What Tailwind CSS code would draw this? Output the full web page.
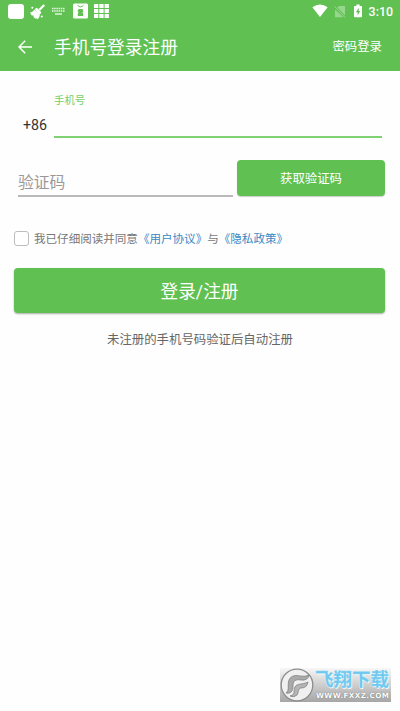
<!DOCTYPE html>
<html lang="zh-CN">
<head>
<meta charset="utf-8">
<title>手机号登录注册</title>
<script src="https://cdn.jsdelivr.net/npm/@tailwindcss/browser@4"></script>
</head>
<body class="bg-[#fefefe]">
<div class="relative flex h-[711px] w-[400px] flex-col overflow-hidden bg-[#fefefe] font-[Roboto,'Noto_Sans_CJK_SC',sans-serif] whitespace-nowrap">
  <header class="h-[71px] shrink-0 bg-[#60c152] text-white">
    <div class="flex h-[22px] items-center justify-between pr-[7px] pl-2">
      <div class="flex items-center">
        <div class="h-[15px] w-4 rounded-[3px] bg-white"></div>
        <svg class="ml-[5px]" width="17" height="17" viewBox="0 0 17 17" fill="white"><path d="M14.500 1.200 L16 2.800 L11 7.700 L9.400 6.200Z"/><path d="M7.500 4.800 L12.400 9.700 L11.200 11 L6.200 6Z"/><path d="M5.700 6.500 L10.900 11.700 C10.700 13.500 9.800 15.300 8.300 16.300 L6.700 14.800 L6.700 16 L4.500 14 L4.600 12.500 L2.700 12.500 L1 9.500 C3 9.500 4.500 8 5.700 6.500Z"/><path d="M6 6 8 5 12 9 10 12Z"/><circle cx="3.300" cy="4.800" r="1"/><circle cx="12.800" cy="13.400" r="1"/></svg>
        <svg class="ml-[6px]" width="13" height="9" viewBox="0 0 13 9" stroke="white" stroke-opacity=".85" fill="none"><path d="M0 1.500h13M0 4h13" stroke-width="1.600" stroke-dasharray="1.500 .7"/><path d="M3 7h7" stroke-width="1.400"/></svg>
        <svg class="ml-2" width="15" height="16" viewBox="0 0 15 16"><rect y=".5" width="15" height="15" rx="1.500" fill="white"/><path d="M4.500 2.300Q7.500 5.400 10.500 2.300" stroke="#60c152" fill="none"/><path d="M4.800 7l1-.9h3.400l1 .9v1.800l-.8.8.8.8V13H4.800v-2.600l.8-.8-.8-.8Z" fill="#60c152"/></svg>
        <svg class="ml-[6px]" width="15" height="14" viewBox="0 0 15 14" fill="white"><path d="M0 0h4.300v4H0zM5.300 0h4.300v4H5.300zM10.600 0h4.300v4h-4.300zM0 5h4.300v4H0zM5.300 5h4.300v4H5.300zM10.600 5h4.300v4h-4.300zM0 10h4.300v4H0zM5.300 10h4.300v4H5.300zM10.600 10h4.300v4h-4.300z"/></svg>
      </div>
      <div class="flex items-center">
        <svg width="16" height="14" viewBox="0 0 16 14"><path d="M.4 3.300Q8-2.300 15.600 3.300L8 13Z" fill="white"/></svg>
        <svg class="ml-[6px]" width="12" height="13" viewBox="0 0 12 13"><path d="M1 4.500V12.200H9.300ZM5 1H11V10.500L3.500 2.600Z" fill="white" fill-opacity=".35"/><path d="M.8 1.600 11.200 12.700" stroke="white" stroke-opacity=".35"/></svg>
        <svg class="ml-2" width="8" height="14" viewBox="0 0 8 14"><path d="M2.400.5h3.200V2H7.200Q8 2 8 2.800v9.700q0 .8-.8.8H.8Q0 13.300 0 12.500V2.800Q0 2 .8 2h1.600Z" fill="white"/><path d="M4.700 3.700 1.900 8.200H3.600v3.300L6.200 7H4.700Z" fill="#60c152"/></svg>
        <span class="ml-[7px] pt-px text-[12.400px] leading-[21px] font-medium">3:10</span>
      </div>
    </div>
    <div class="flex h-[49px] items-center px-[18px]">
      <svg width="14" height="14" viewBox="0 0 14 14" fill="none" stroke="white" stroke-width="1.500"><path d="M14 7H1M7.200.8 1 7l6.200 6.200"/></svg>
      <h1 class="ml-[22px] pt-[2px] text-[17.700px] leading-6">手机号登录注册</h1>
      <span class="ml-auto pt-px text-[12.400px] leading-5">密码登录</span>
    </div>
  </header>
  <main class="flex flex-col">
    <div class="flex h-[67px] pl-[23px]">
      <span class="w-[31px] pt-[44px] text-[14.200px] leading-5 text-[#333]">+86</span>
      <div class="flex h-[67px] w-[328px] flex-col justify-between pt-[22px] text-[10.400px] leading-4 text-[#76cf6b]"><span>手机号</span><span class="block h-[2px] bg-[#80d074]"></span></div>
    </div>
    <div class="mt-[22px] flex h-[37px] pl-[18px]">
      <div class="flex h-[37px] w-[215px] flex-col justify-between pt-[11px] text-[15.800px] leading-6 text-[#999]"><span>验证码</span><span class="block h-[2px] shrink-0 bg-[#b9b9b9]"></span></div>
      <button class="ml-1 h-9 w-[148px] rounded-[4px] bg-[#60c152] pt-px text-[12.400px] leading-9 text-white shadow-[0_1px_1px_#00000033]">获取验证码</button>
    </div>
    <div class="mt-[31px] flex h-5 items-center pl-[14px] text-[11.550px] leading-5 text-[#777]">
      <span class="mr-[5px] h-[15px] w-[15px] rounded-[3px] border border-[#bdbdbd] bg-white"></span>
      <div class="pt-px"><span>我已仔细阅读并同意</span><span class="text-[#3989c5]">《用户协议》</span><span>与</span><span class="text-[#3989c5]">《隐私政策》</span></div>
    </div>
    <button class="mt-5 ml-[14px] h-[45px] w-[371px] rounded-[4px] bg-[#60c152] pt-[3px] text-[17.700px] leading-[42px] text-white shadow-[0_1px_2px_#00000055]">登录/注册</button>
    <p class="mt-[17px] text-center text-[12.400px] leading-5 text-[#666]">未注册的手机号码验证后自动注册</p>
  </main>
  <div class="absolute top-[668px] left-[280px] flex h-[34px] w-[111px] bg-linear-to-b from-[#f7f7f7] to-[#a6a6a6]">
    <svg class="shrink-0" width="34" height="34" viewBox="0 0 34 34"><circle cx="17" cy="17" r="15.800" fill="#f0f0f0" stroke="#8d8d8d" stroke-width="1.300"/><path d="M6 25C10 22 7 17 9 12C11 7 17 7 20 8Q25 9 29 7Q28 13 21 12C15 11 13 13 13 18C13 23 11 26 6 25Z" fill="#aaa" stroke="#777" stroke-width=".7"/><path d="M10 28C16 27 13 22 15 19C17 15 22 17 28 14Q27 20 21 20C18 20 19 24 17 27Q14 30 10 28Z" fill="#b5b5b5" stroke="#777" stroke-width=".7"/></svg>
    <div class="flex flex-col">
      <span class="mt-[1px] ml-[1px] text-[18.500px] leading-[22px] font-bold text-[#6ec8ef] [-webkit-text-stroke:.3px_#8ed5f3] [text-shadow:0_0_1px_#fff,1px_1px_1px_#fff]">飞翔下载</span>
      <span class="ml-[2px] w-[76px] font-['DejaVu_Sans',sans-serif] text-[7.200px] leading-[9px] font-bold tracking-[.4px] text-white [text-shadow:0_0_1px_#555]">WWW.FXXZ.COM</span>
    </div>
  </div>
</div>
</body>
</html>
